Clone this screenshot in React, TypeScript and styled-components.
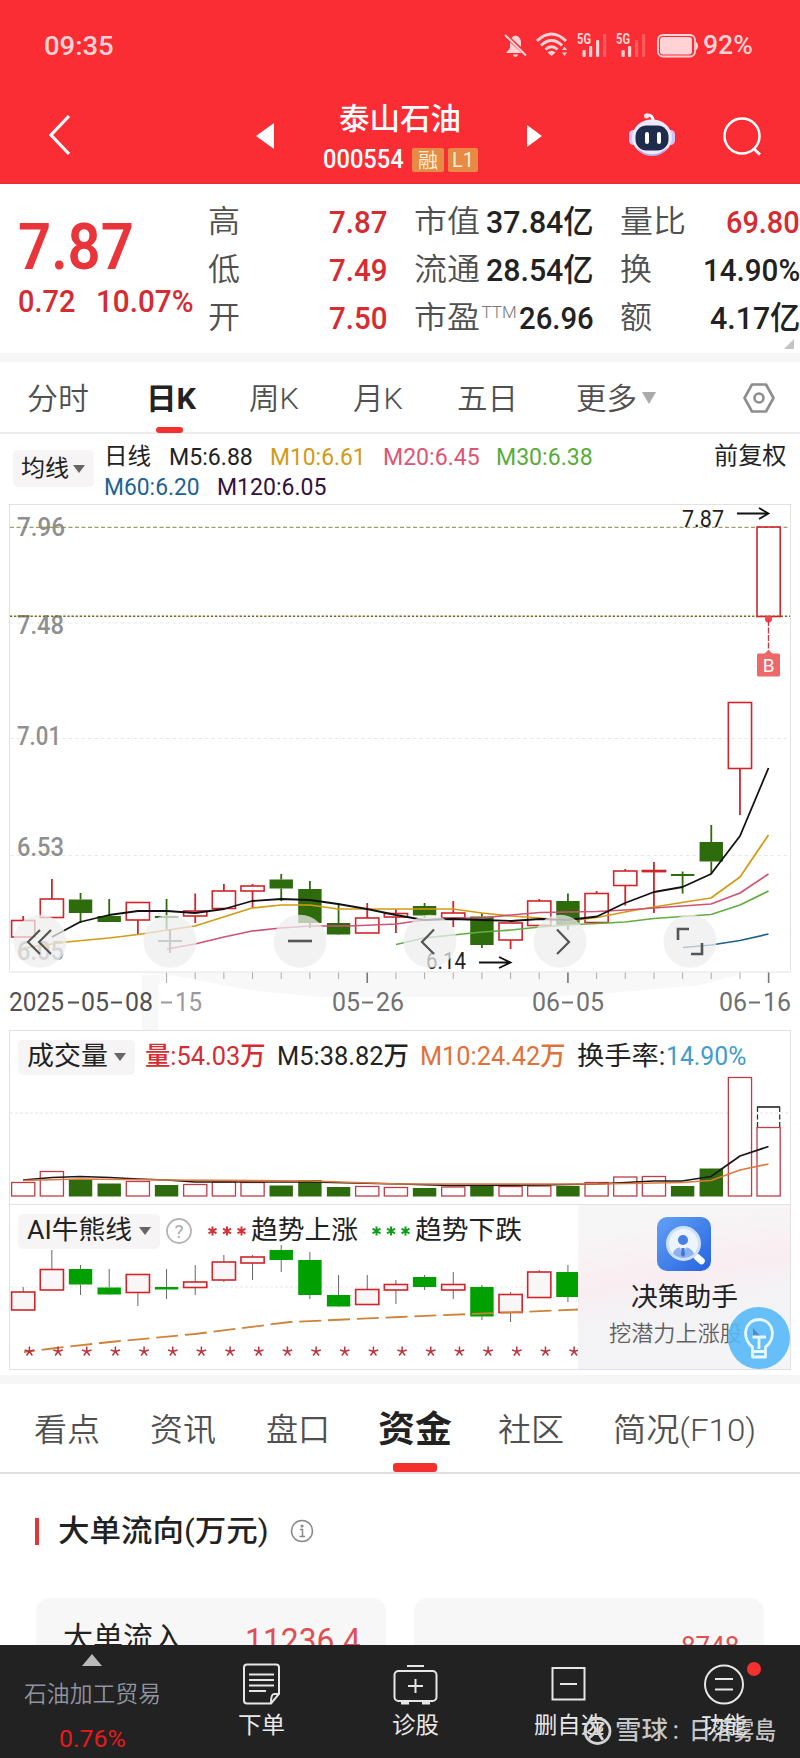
import React, { useLayoutEffect, useRef, useState } from 'react';
import styled, { createGlobalStyle } from 'styled-components';

const Global = createGlobalStyle`
  * { box-sizing: border-box; }
  body { margin: 0; background: #fff; font-family: Roboto, "Noto Sans CJK SC", sans-serif; color: #222; }
  svg { display: block; }
`;

/* ---------- text fitted to a fixed measure ---------- */
const FitBox = styled.span<{ $w: number; $ml?: number; $size: number; $color?: string; $weight?: number }>`
  display: block;
  flex: none;
  width: ${p => p.$w}px;
  margin-left: ${p => p.$ml ?? 0}px;
  font-size: ${p => p.$size}px;
  line-height: 1.2;
  font-weight: ${p => p.$weight ?? 400};
  color: ${p => p.$color ?? 'inherit'};
  white-space: nowrap;
`;
const FitInner = styled.span`
  display: inline-block;
  transform-origin: 0 50%;
  margin-left: -1px;
`;
type FitProps = { w: number; ml?: number; size: number; color?: string; weight?: number; children: React.ReactNode };
function Fit({ w, ml, size, color, weight, children }: FitProps) {
  const ref = useRef<HTMLSpanElement>(null);
  const [k, setK] = useState(1);
  useLayoutEffect(() => {
    if (ref.current) setK((w + 2) / ref.current.offsetWidth);
  }, [w]);
  return (
    <FitBox $w={w} $ml={ml} $size={size} $color={color} $weight={weight}>
      <FitInner ref={ref} style={{ transform: `scaleX(${k})` }}>{children}</FitInner>
    </FitBox>
  );
}

/* ---------- layout parts ---------- */
const Page = styled.main`width: 800px; height: 1758px; overflow: hidden; background: #fff; display: flex; flex-direction: column;`;
const Header = styled.header`background: #fb2d34; height: 184px; flex: none; color: #fff; border-bottom: 1px solid #d8333a;`;
const StatusBar = styled.div`height: 91px; display: flex; align-items: center; padding: 1px 0 0 45px; color: #ffd3d5;`;
const StatusIcons = styled.div`margin-left: auto; display: flex; align-items: center;`;
const NavBar = styled.div`height: 92px; display: flex; align-items: flex-start; padding-left: 48px;`;
const Title = styled.div`display: flex; flex-direction: column; align-items: flex-start; width: 156px; margin-left: 48px; padding-top: 10px; height: 92px;`;
const CodeLine = styled.div`display: flex; align-items: center; margin-top: 7px;`;
const Tag = styled.span<{ $ml: number; $w: number }>`
  margin-left: ${p => p.$ml}px; width: ${p => p.$w}px; height: 24px; border-radius: 2px; background: #e68a45; color: #fff0d2;
  display: flex; align-items: center; justify-content: center; font-size: 20px;
`;
const Shift = styled.div<{ $ml?: number; $mt?: number }>`margin-left: ${p => p.$ml ?? 0}px; margin-top: ${p => p.$mt ?? 0}px; flex: none;`;

const Quote = styled.section`height: 169px; flex: none; display: flex;`;
const PriceBlock = styled.div`width: 209px; padding: 24px 0 0 19px; display: flex; flex-direction: column;`;
const PriceRow = styled.div`display: flex; margin-top: -3px;`;
const StatCol = styled.div<{ $w: number; $ml: number }>`
  width: ${p => p.$w}px; margin-left: ${p => p.$ml}px; padding-top: 14px; display: flex; flex-direction: column; flex: none;
`;
const StatRow = styled.div`height: 48px; display: flex; align-items: center; justify-content: space-between;`;
const Ttm = styled.sup`font-size: 17px; align-self: flex-start; color: #777; margin-top: 8px; width: 33px; margin-left: -1px;`;
const Corner = styled.i`
  align-self: flex-end; width: 0; height: 0; border-bottom: 10px solid #c4c4c4; border-left: 10px solid transparent; margin: -3px 5px 0 0;
`;
const Band = styled.div`height: 9px; background: #f6f6f6; flex: none;`;
const Tabs = styled.nav<{ $h: number; $pt: number; $line: string }>`
  height: ${p => p.$h}px; flex: none; display: flex; align-items: flex-start; padding-top: ${p => p.$pt}px; border-bottom: 2px solid ${p => p.$line};
`;
const Tab = styled.div`display: flex; flex-direction: column; flex: none;`;
const Mark = styled.i<{ $w: number; $h: number; $ml: number; $mt: number }>`
  width: ${p => p.$w}px; height: ${p => p.$h}px; margin: ${p => p.$mt}px 0 0 ${p => p.$ml}px; border-radius: 3px; background: #f4302f;
`;
const MaBar = styled.div`height: 70px; flex: none; display: flex; padding: 8px 0 0 13px;`;
const Select = styled.button<{ $w: number; $h: number; $mt?: number }>`
  width: ${p => p.$w}px; height: ${p => p.$h}px; margin: ${p => p.$mt ?? 0}px 0 0; flex: none; border: 0; border-radius: 5px;
  background: #f6f4f5; color: #222; display: flex; align-items: center; justify-content: space-between; padding: 0 9px 0 8px; font-family: inherit;
`;
const Caret = styled.i<{ $w?: number; $h?: number; $c?: string }>`
  display: block; width: 0; height: 0; border-left: ${p => p.$w ?? 6}px solid transparent; border-right: ${p => p.$w ?? 6}px solid transparent;
  border-top: ${p => p.$h ?? 8}px solid ${p => p.$c ?? '#666'};
`;
const MaLines = styled.div`margin-left: 11px; width: 610px; display: flex; flex-direction: column; gap: 1px;`;
const MaLine = styled.div`display: flex; align-items: center; height: 29px;`;
const Chart = styled.section<{ $h: number }>`height: ${p => p.$h}px; flex: none;`;
const Panel = styled.section<{ $h: number }>`
  height: ${p => p.$h}px; flex: none; margin: 0 9px; border: 1px solid #e2e2e4; border-bottom: 0; display: flex; flex-direction: column;
`;
const PanelHead = styled.div`display: flex; align-items: center; height: 35px; margin: 8px 0 0 8px; padding-top: 1px; flex: none;`;
const AiBox = styled.section`height: 166px; flex: none; margin: 0 9px; border: 1px solid #e2e2e4; display: flex;`;
const AiMain = styled.div`width: 568px; flex: none; overflow: hidden;`;
const Helper = styled.aside`
  flex: 1; position: relative; display: flex; flex-direction: column; align-items: center; padding-top: 12px;
  background: linear-gradient(170deg, #f7f6f7 15%, #f9edf1 42%, #f3f3f6 62%, #f5f5f8 100%);
`;
const Bulb = styled.div`position: absolute; right: 0; top: 101px;`;
const Section = styled.div`height: 124px; flex: none; display: flex; align-items: center; padding: 0 0 10px 35px;`;
const RedBar = styled.i`width: 4px; height: 27px; background: #e2353a; margin-right: 20px;`;
const Cards = styled.div`height: 47px; flex: none; overflow: hidden; display: flex; gap: 28px; padding-left: 36px;`;
const Card = styled.div<{ $pt: number }>`
  width: 350px; height: 120px; border-radius: 14px; background: #f7f7f7; padding: ${p => p.$pt}px 26px 0 28px; display: flex; justify-content: space-between; align-items: flex-start;
`;
const BottomBar = styled.footer`height: 113px; flex: none; background: #222; display: flex; position: relative; color: #e9e9e9;`;
const Item = styled.div<{ $ml: number; $w: number }>`
  width: ${p => p.$w}px; margin-left: ${p => p.$ml}px; padding-top: 18px; display: flex; flex-direction: column; align-items: center; flex: none;
`;
const Board = styled.div`width: 136px; margin-left: 24px; display: flex; flex-direction: column; align-items: center; padding-top: 9px; flex: none;`;
const UpArrow = styled.i`width: 0; height: 0; border-left: 10px solid transparent; border-right: 10px solid transparent; border-bottom: 12px solid #bbb;`;
const Dot = styled.i`position: absolute; left: 747px; top: 17px; width: 14px; height: 14px; border-radius: 50%; background: #f3312f;`;
const Watermark = styled.div`position: absolute; left: 583px; top: 71px; display: flex; align-items: center; color: rgba(222,222,222,.88);`;

/* ---------- chart data ---------- */
const X0 = 23.2, STEP = 28.67, R = '#d0252b', G = '#2e6b0d';
const cx = (i: number) => X0 + STEP * i;
type Bar = [up: 0 | 1, top: number, bottom: number, high: number, low: number];
const kline: Bar[] = [
  [1, 920.5, 937, 916, 937], [1, 899, 917.5, 879, 917.5], [0, 899.5, 913, 893, 923], [0, 916, 922, 899, 922],
  [1, 902.5, 920, 902, 935], [0, 916, 918, 899, 930], [1, 911, 916, 893.5, 923], [1, 891, 908.5, 884, 910],
  [1, 886, 891, 884, 908], [0, 879.5, 888.5, 874, 901], [0, 889, 923, 881, 928], [0, 923, 934.5, 903, 934],
  [1, 918, 933, 903, 933], [1, 913.5, 917, 909, 933], [0, 906, 915.5, 903, 918], [1, 913, 918, 901, 927],
  [0, 916.5, 945, 913, 948], [1, 923, 940, 923, 949], [1, 901, 925.5, 899, 925], [0, 901, 925, 893.5, 930],
  [1, 893.5, 922.5, 891, 922], [1, 871, 885.5, 869, 905.5], [1, 870.5, 871.5, 862, 913], [0, 874, 876, 871.5, 893.5],
  [0, 842, 861.5, 825, 874], [1, 702.5, 768.5, 702, 815], [1, 527, 616.5, 527, 616],
];
const trend: Bar[] = [
  [1, 1292, 1310, 1287, 1310], [1, 1269.5, 1290, 1250, 1290], [0, 1269, 1284.5, 1265, 1295], [0, 1287.5, 1294.5, 1269, 1294],
  [1, 1274.5, 1292.5, 1274, 1306], [0, 1287, 1289.5, 1269, 1299], [1, 1282, 1287.5, 1265, 1295], [1, 1262, 1280, 1255, 1282],
  [1, 1257, 1263, 1255, 1280], [0, 1250, 1260, 1245, 1272], [0, 1260, 1295, 1252, 1299], [0, 1295, 1306.5, 1275, 1306],
  [1, 1289.5, 1304.5, 1275, 1304], [1, 1284.5, 1290, 1280, 1304], [0, 1277, 1287, 1275, 1290], [1, 1284.5, 1290, 1272, 1299],
  [0, 1287, 1316.5, 1285, 1320], [1, 1294.5, 1312.5, 1292, 1322], [1, 1272, 1297.5, 1270, 1297], [0, 1272, 1297, 1265, 1302],
];
const volume = [1182.5, 1171.5, 1179.5, 1183.5, 1181.5, 1185, 1184.5, 1182, 1182.5, 1185.5, 1180, 1187, 1186.5, 1187.5, 1188, 1187, 1185.5, 1186.5, 1186, 1186, 1182.5, 1177, 1176.5, 1186, 1168.5, 1077.5, 1127.5];

function Candle({ i, bar, up = R, down = G, wick, fill = '#fff' }: { i: number; bar: Bar; up?: string; down?: string; wick?: string; fill?: string }) {
  const [isUp, top, bottom, high, low] = bar;
  const x = cx(i), c = isUp ? up : down;
  return (
    <g>
      <path d={`M${x} ${high}V${top}M${x} ${bottom}V${low}`} stroke={wick ?? c} strokeWidth={wick ? 1 : 1.8} />
      {isUp
        ? <rect x={x - 11.6} y={top} width={23.2} height={bottom - top} fill={fill} stroke={c} strokeWidth={1.6} />
        : <rect x={x - 11.7} y={top} width={23.4} height={bottom - top} fill={c} />}
    </g>
  );
}
function Label({ x, y, w, size = 25, color = '#8f8f8f', weight = 500, children }: { x: number; y: number; w: number; size?: number; color?: string; weight?: number; children: string }) {
  return <text x={x} y={y} textLength={w} lengthAdjust="spacingAndGlyphs" fontSize={size} fill={color} fontWeight={weight}>{children}</text>;
}
const Line = ({ d, c, w = 1.7 }: { d: string; c: string; w?: number }) => <polyline points={d} fill="none" stroke={c} strokeWidth={w} strokeLinejoin="round" />;

/* Dates are spelled with a wide dash between separately set numerals. */
function DateLabel({ x, y, parts, color }: { x: number; y: number; parts: [number, number, string][]; color: string }) {
  return <g>{parts.map(([dx, w, t]) => t === '-'
    ? <path key={dx} d={`M${x + dx} ${y - 8.5}h${w}`} stroke={color} strokeWidth="2" />
    : <Label key={dx} x={x + dx} y={y} w={w} size={26} color={color} weight={400}>{t}</Label>)}</g>;
}

function KChart() {
  return (
    <svg width="800" height="526" viewBox="0 504 800 526">
      <path d="M142 973H745L700 985 600 994 540 997H320L250 990 170 975Z" fill="#f8f8f9" />
      <path d="M142 975H170L158 985V1034H142Z" fill="#f8f8f9" />
      <rect x="9.5" y="504.5" width="781" height="467.5" fill="none" stroke="#e2e2e4" />
      <path d="M10 623H790M10 738.5H790M10 855.5H790" stroke="#e8e8e8" strokeDasharray="3.5 3" />
      <Label x={17} y={535.5} w={48}>7.96</Label>
      <Label x={17} y={634} w={47}>7.48</Label>
      <Label x={17} y={745} w={44}>7.01</Label>
      <Label x={17} y={856} w={47}>6.53</Label>
      <Label x={17} y={960} w={47}>6.05</Label>
      <path d="M10 527.3H790" stroke="#84864a" strokeDasharray="4 2.5" />
      <path d="M10 616.3H790" stroke="#74651f" strokeWidth="1.4" strokeDasharray="2.3 1.8" />
      {kline.map((b, i) => <Candle key={i} i={i} bar={b} fill="none" />)}
      <path d="M643 871.2H665.5" stroke={R} strokeWidth="2" />
      <Line c="#d39a14" d="23,948 52,944 66,942 109,938 138,934.5 195,926 252,908 281,905 310,905 338,909 367,909 424,909 453,909 482,913 511,916 540,918 568,921 597,917.5 625,912 654,907 682,902.5 711,898 740,877 768.5,835" />
      <Line c="#cf5372" d="167,949 195,944 224,937 252,931 281,928 310,926 350,926 396,924 424,920 453,918 482,918 511,915 540,912.5 597,911.5 625,910 654,908 711,904 740,893 768.5,874" />
      <Line c="#62ad42" d="396,944.5 424,938 453,935 482,932 511,930 540,927 568,925 625,922 654,918.5 711,914.5 740,905 768.5,891" />
      <Line c="#1d608e" d="683,947.5 711,945 740,940.5 768.5,934" />
      <Line c="#111" w={1.8} d="52,937 80,922 109,915 138,911 167,911 195,913 224,909 252,901 281,899 310,900 338,904 367,909 396,915 424,920 453,919 482,920 511,921 540,919 568,920 597,916.5 625,903 654,892 682.5,887 711,874 740,836 768.5,768" />
      <Label x={682} y={527} w={42} size={23} color="#222" weight={400}>7.87</Label>
      <path d="M737 513.5H768M759 508L768.5 513.5 759 519" fill="none" stroke="#111" strokeWidth="1.8" />
      <circle cx="768.5" cy="619" r="3.5" fill="#f04848" />
      <path d="M768.5 620V652" stroke="#c43a48" strokeWidth="1.4" strokeDasharray="6 1.5" />
      <path d="M758.5 653.5H764.5L768.5 650 772.5 653.5H778.5A1.5 1.5 0 0 1 780 655V675A1.5 1.5 0 0 1 778.5 676.5H758.5A1.5 1.5 0 0 1 757 675V655A1.5 1.5 0 0 1 758.5 653.5Z" fill="#ee6769" />
      <text x="768.6" y="672" fontSize="19" fill="#fff" textAnchor="middle">B</text>
      <Label x={426} y={968.5} w={40} size={23} color="#222" weight={400}>6.14</Label>
      <path d="M479 962.5H510M499 957L510.5 962.5 499 968" fill="none" stroke="#111" strokeWidth="1.8" />
      {[40, 170, 300, 430, 560, 690].map(x => <circle key={x} cx={x} cy="941.3" r="26.5" fill="#eeeeef" fillOpacity=".74" />)}
      <g fill="none" stroke="#555" strokeWidth="2.2">
        <path d="M40 930 28 942 40 954M51 930 39 942 51 954" />
        <path d="M158 941H182M170 929V953" stroke="#ccc" />
        <path d="M288 941H312" strokeWidth="2.6" />
        <path d="M434 929.5 422 942 434 954" />
        <path d="M557 929.5 569 942 557 954" />
        <path d="M678 940V929H689M691 954H702V943" strokeWidth="2.6" />
      </g>
      {Array.from({ length: 22 }, (_, k) => {
        const x = cx(k + 5), major = k === 7 || k === 14 || k === 21;
        return <path key={k} d={`M${x} 972.5V${major || k === 0 ? 983 : 979}`} stroke={major ? '#777' : '#aaa'} strokeWidth={major ? 1.6 : 1} />;
      })}
      <DateLabel x={10} y={1011} color="#505050" parts={[[-1, 55, '2025'], [58, 11, '-'], [71, 28, '05'], [101, 11, '-'], [115, 28, '08']]} />
      <DateLabel x={161} y={1011} color="#999" parts={[[0, 11, '-'], [14, 27, '15']]} />
      <DateLabel x={333} y={1011} color="#707070" parts={[[-1, 28, '05'], [29, 11, '-'], [43, 28, '26']]} />
      <DateLabel x={533} y={1011} color="#707070" parts={[[-1, 28, '06'], [29, 11, '-'], [43, 28, '05']]} />
      <DateLabel x={720} y={1011} color="#707070" parts={[[-1, 28, '06'], [29, 11, '-'], [43, 28, '16']]} />
    </svg>
  );
}

function VolumeChart() {
  return (
    <svg width="781" height="130" viewBox="10 1074 781 130">
      <path d="M10 1113H791" stroke="#e4e4e4" strokeDasharray="3 2" />
      {volume.map((t, i) => kline[i][0]
        ? <rect key={i} x={cx(i) - 11.6} y={t} width="23.2" height={1196 - t} fill="#fff" stroke="#bd3e48" strokeWidth="1.3" />
        : <rect key={i} x={cx(i) - 11.7} y={t} width="23.4" height={1196.5 - t} fill={G} />)}
      <path d="M757 1107H780" stroke="#222" strokeWidth="1.6" />
      <path d="M757.5 1107V1127M779.7 1107V1127" stroke="#333" strokeWidth="1.3" strokeDasharray="5 2.5" />
      <Line c="#181818" d="23,1180 52,1177.5 80,1176.5 110,1177.5 138,1179 167,1180 195,1182 310,1182 400,1184 450,1185.5 540,1185 597,1184 654,1181 682,1181 711,1176.5 740,1156 768.5,1146.5" />
      <Line c="#e0783f" d="23,1180.5 80,1179 167,1180 310,1181 400,1184 600,1184 682,1182.5 711,1180.5 740,1170 768.5,1164" />
    </svg>
  );
}

function rays(angles: number[], x: number, y: number, r: number) {
  return angles.map(a => `M${x} ${y}L${x + r * Math.cos((a * Math.PI) / 180)} ${y - r * Math.sin((a * Math.PI) / 180)}`).join('');
}
const FIVE = [90, 162, 234, 306, 18], SIX = [90, 150, 210, 270, 330, 30];
const Stars = ({ c }: { c: string }) => (
  <svg width="40" height="12" viewBox="0 0 40 12"><path d={[5.5, 20, 34.5].map(x => rays(SIX, x, 6, 4.6)).join('')} stroke={c} strokeWidth="2" /></svg>
);

function TrendChart() {
  return (
    <svg width="568" height="126" viewBox="10 1243 568 126">
      <path d="M10 1287H578" stroke="#e8e8e8" strokeDasharray="3 2" />
      {trend.map((b, i) => <Candle key={i} i={i} bar={b} down="#00a000" wick="#666" fill="#f8f6f7" />)}
      <polyline points="24,1352 52,1348.5 110,1342 195,1334 290,1322 400,1317 578,1309.5" fill="none" stroke="#cf8339" strokeWidth="1.8" strokeDasharray="22 6.8" strokeDashoffset="11" />
      <path d={Array.from({ length: 20 }, (_, i) => rays(FIVE, 29.4 + STEP * i, 1351.5, 5)).join('')} stroke="#b93640" strokeWidth="1.5" />
    </svg>
  );
}

/* ---------- icons ---------- */
const Muted = () => (
  <svg width="24" height="24" viewBox="0 0 24 24"><path d="M11.5 1.5C7.5 2.5 6 5.5 6 9V14L2 19H20L17 15V9C17 5 15.5 2.5 11.5 1.5ZM9 20.5H14A2.5 2.5 0 0 1 9 20.5Z" fill="#ffd3d5" /><path d="M1 1 23 21" stroke="#fb2d34" strokeWidth="4" /><path d="M1 1 22 21.5" stroke="#ffd3d5" strokeWidth="2" /></svg>
);
const Wifi = () => (
  <svg width="32" height="26" viewBox="0 0 32 26"><g fill="none" stroke="#ffd3d5" strokeWidth="3"><path d="M1 9Q15.500-5 30 9M5 13.500Q15.500 3.500 26 13.500M9.500 17.500Q15.500 12 21.500 17.500" /></g><path d="M15.500 24 11.500 20.500Q15.500 17 19.500 20.500ZM26 18 28.500 14.500 31 18ZM26 20.500 28.500 24 31 20.500Z" fill="#ffd3d5" /></svg>
);
const Signal = ({ bars }: { bars: number }) => (
  <svg width="32" height="26" viewBox="0 0 32 26">
    <text x="0" y="11.5" fontSize="14.5" fontWeight="700" fill="#ffd3d5" textLength="14" lengthAdjust="spacingAndGlyphs">5G</text>
    {[[5.5, 18], [12, 14], [19, 8], [26, 2]].map(([x, y], i) => <rect key={i} x={x} y={y} width="3.2" height={25 - y} rx="1" fill="#ffd3d5" fillOpacity={i < bars ? 1 : 0.28} />)}
  </svg>
);
const Battery = () => (
  <svg width="42" height="24" viewBox="0 0 42 24"><rect x="1" y="1" width="37" height="21.5" rx="5" fill="none" stroke="#ffd3d5" strokeWidth="1.8" /><rect x="3" y="3" width="32" height="17.500" rx="3" fill="#ffd3d5" /><path d="M39.500 8.500Q42 12 39.500 15.500Z" fill="#ffd3d5" stroke="#ffd3d5" /></svg>
);
const Robot = () => (
  <svg width="48" height="44" viewBox="0 0 48 44">
    <path d="M25 8C25 4 23 1.5 19 2" fill="none" stroke="#fff" strokeWidth="3" strokeLinecap="round" />
    <circle cx="18.500" cy="3" r="2.500" fill="#fbe6ef" />
    <rect x="1" y="17" width="10" height="15" rx="4.5" fill="#cfc5f7" /><rect x="37" y="17" width="10" height="15" rx="4.5" fill="#cfc5f7" />
    <ellipse cx="24" cy="24.500" rx="20" ry="18" fill="#eeeaff" /><path d="M8 34Q24 49 40 34Q35 43 24 43 13 43 8 34Z" fill="#b6a8ef" />
    <rect x="7.500" y="12.500" width="33" height="25" rx="11" fill="#1e2b4b" />
    <path d="M19 21V29M31 21V29" stroke="#fff" strokeWidth="4" strokeLinecap="round" />
  </svg>
);
const HelperIcon = () => (
  <svg width="54" height="54" viewBox="0 0 54 54">
    <defs><linearGradient id="hg" x1="0" y1="0" x2="1" y2="1"><stop offset="0" stopColor="#63a1f6" /><stop offset="1" stopColor="#2563df" /></linearGradient></defs>
    <rect width="54" height="54" rx="10" fill="url(#hg)" />
    <path d="M40 40 44.500 44" stroke="#fff" strokeWidth="6.500" strokeLinecap="round" />
    <circle cx="26.500" cy="26.500" r="16" fill="#edf4fe" stroke="#cfe0fb" strokeWidth="3" />
    <circle cx="26" cy="23" r="5" fill="#4680e2" /><path d="M16 37Q17 31 23 30.500L26 38 29 30.500Q35 31 37 37Q26.500 45 16 37Z" fill="#8db2ef" /><path d="M24.500 31H27.500L28 38 26 40 24 38Z" fill="#3c76dd" />
  </svg>
);
const BulbIcon = () => (
  <svg width="62" height="64" viewBox="0 0 62 64"><circle cx="31" cy="32" r="31" fill="#58b9f8" fillOpacity=".9" />
    <path d="M25 22 34 32 25 31Z" fill="#548ac8" />
    <g fill="none" stroke="#e7f8ff" strokeWidth="2.800" strokeLinejoin="round"><path d="M24.500 51V41C14 34 15 14 31 13.500C47 14 48 34 37.500 41V51ZM24.500 31H38M31 31V43M26 45.500H36" /></g></svg>
);
const Order = () => <svg width="39" height="42" viewBox="0 0 39 42" fill="none" stroke="#e6e6e6" strokeWidth="2"><path d="M5 1.500H34Q37 1.500 37 4.500V31L29 40.500H5Q2 40.500 2 37.500V4.500Q2 1.500 5 1.500ZM37 31H32Q29 31 29 40M7 11.500H32M7 17H32M7 22.500H32M7 28H24" /></svg>;
const Clinic = () => <svg width="45" height="42" viewBox="0 0 45 42" fill="none" stroke="#e6e6e6" strokeWidth="2"><path d="M14 3H31M22.500 16V30M15 23H30" /><rect x="1.500" y="8" width="42" height="30" rx="4" /><path d="M8 40H16M29 40H37" strokeWidth="3" /></svg>;
const Remove = () => <svg width="36" height="42" viewBox="0 0 36 42" fill="none" stroke="#e6e6e6" strokeWidth="2"><rect x="1.500" y="5" width="32" height="31.500" /><path d="M9 21H26" /></svg>;
const Func = () => <svg width="42" height="42" viewBox="0 0 42 42" fill="none" stroke="#e6e6e6" strokeWidth="2"><circle cx="21" cy="21.500" r="19" /><path d="M12 16H30M12 26.500H30" /></svg>;

const gray = '#505050', red = '#d52b31';
export default function App() {
  return (
    <Page>
      <Global />
      <Header>
        <StatusBar>
          <Fit w={68} size={25.5} weight={500}>09:35</Fit>
          <StatusIcons>
            <Shift><Muted /></Shift><Shift $ml={8} $mt={-2}><Wifi /></Shift><Shift $ml={9} $mt={-2}><Signal bars={3} /></Shift>
            <Shift $ml={7} $mt={-2}><Signal bars={2} /></Shift><Shift $ml={9}><Battery /></Shift>
            <Fit w={48} ml={5} size={25} weight={500}>92%</Fit><Shift $ml={48} />
          </StatusIcons>
        </StatusBar>
        <NavBar>
          <Shift $mt={23}><svg width="24" height="42" viewBox="0 0 24 42"><path d="M21 2 3 21 21 40" fill="none" stroke="#fff" strokeWidth="3.200" /></svg></Shift>
          <Shift $ml={184} $mt={32}><svg width="18" height="26"><path d="M0 13 18 0V26Z" fill="#fff" /></svg></Shift>
          <Title>
            <Fit w={120} ml={18} size={30} weight={500}>泰山石油</Fit>
            <CodeLine><Fit w={79} ml={2} size={26} weight={500}>000554</Fit><Tag $ml={9} $w={32}>融</Tag><Tag $ml={4} $w={30}>L1</Tag></CodeLine>
          </Title>
          <Shift $ml={49} $mt={34}><svg width="15" height="22"><path d="M15 11 0 0V22Z" fill="#fff" /></svg></Shift>
          <Shift $ml={86} $mt={22}><Robot /></Shift>
          <Shift $ml={46} $mt={25}><svg width="42" height="42" viewBox="0 0 42 42" fill="none" stroke="#fff" strokeWidth="2.500"><circle cx="20" cy="20" r="17.500" /><path d="M32 33 38 38.500" strokeWidth="3" /></svg></Shift>
        </NavBar>
      </Header>

      <Quote>
        <PriceBlock>
          <Fit w={114} size={65} color="#e9343a" weight={600}>7.87</Fit>
          <PriceRow><Fit w={55} size={31.5} color={red} weight={500}>0.72</Fit><Fit w={96} ml={23} size={31.5} color={red} weight={500}>10.07%</Fit></PriceRow>
        </PriceBlock>
        <StatCol $w={177} $ml={0}>
          {[['高', '7.87'], ['低', '7.49'], ['开', '7.50']].map(([a, b]) => (
            <StatRow key={a}><Fit w={30} size={31} color={gray} weight={350}>{a}</Fit><Fit w={56} size={32} color={red} weight={500}>{b}</Fit></StatRow>
          ))}
        </StatCol>
        <StatCol $w={178} $ml={29}>
          <StatRow><Fit w={64} size={31} color={gray} weight={350}>市值</Fit><Fit w={106} size={32} weight={500}>37.84亿</Fit></StatRow>
          <StatRow><Fit w={64} size={31} color={gray} weight={350}>流通</Fit><Fit w={106} size={32} weight={500}>28.54亿</Fit></StatRow>
          <StatRow><Fit w={64} size={31} color={gray} weight={350}>市盈</Fit><Ttm><Fit w={33} size={17} weight={350}>TTM</Fit></Ttm><Fit w={73} size={32} weight={500}>26.96</Fit></StatRow>
        </StatCol>
        <StatCol $w={178} $ml={28}>
          <StatRow><Fit w={64} size={31} color={gray} weight={350}>量比</Fit><Fit w={72} size={32} color={red} weight={500}>69.80</Fit></StatRow>
          <StatRow><Fit w={30} size={31} color={gray} weight={350}>换</Fit><Fit w={95} size={32} weight={500}>14.90%</Fit></StatRow>
          <StatRow><Fit w={30} size={31} color={gray} weight={350}>额</Fit><Fit w={88} size={32} weight={500}>4.17亿</Fit></StatRow>
          <Corner />
        </StatCol>
      </Quote>
      <Band />

      <Tabs $h={72} $pt={19} $line="#ededed">
        <Tab><Fit w={60} ml={28} size={30} color={gray} weight={350}>分时</Fit></Tab>
        <Tab><Fit w={48} ml={59} size={30} weight={700}>日K</Fit><Mark $w={27} $h={6} $ml={68} $mt={10} /></Tab>
        <Tab><Fit w={48} ml={55} size={30} color={gray} weight={350}>周K</Fit></Tab>
        <Tab><Fit w={48} ml={56} size={30} color={gray} weight={350}>月K</Fit></Tab>
        <Tab><Fit w={59} ml={56} size={30} color={gray} weight={350}>五日</Fit></Tab>
        <Tab><Fit w={59} ml={60} size={30} color={gray} weight={350}>更多</Fit></Tab>
        <Shift $ml={6} $mt={11}><Caret $w={7} $h={12} $c="#aaa" /></Shift>
        <Shift $ml={87} $mt={2}><svg width="32" height="30" viewBox="0 0 32 30" fill="none" stroke="#8d8d8d" strokeWidth="2.600"><path d="M9 1.500H23L30.500 15 23 28.500H9L1.500 15Z" strokeLinejoin="round" /><circle cx="16" cy="15" r="4.500" /></svg></Shift>
      </Tabs>

      <MaBar>
        <Select $w={81} $h={37} $mt={8}><Fit w={46} size={23}>均线</Fit><Caret /></Select>
        <MaLines>
          <MaLine>
            <Fit w={45} size={23}>日线</Fit><Fit w={82} ml={20} size={24.5} weight={450}>M5:6.88</Fit><Fit w={94} ml={19} size={24.5} weight={450} color="#d19a18">M10:6.61</Fit>
            <Fit w={95} ml={19} size={24.5} weight={450} color="#dd5574">M20:6.45</Fit><Fit w={95} ml={18} size={24.5} weight={450} color="#58ad38">M30:6.38</Fit>
          </MaLine>
          <MaLine><Fit w={94} size={24.5} weight={450} color="#1e6294">M60:6.20</Fit><Fit w={107} ml={19} size={24.5} weight={450} color="#32103f">M120:6.05</Fit></MaLine>
        </MaLines>
        <Fit w={71} size={23.5}>前复权</Fit>
      </MaBar>

      <Chart $h={526}><KChart /></Chart>

      <Panel $h={174}>
        <PanelHead>
          <Select $w={117} $h={35}><Fit w={79} ml={1} size={26}>成交量</Fit><Caret /></Select>
          <Fit w={119} ml={11} size={26} weight={450} color={red}>量:54.03万</Fit><Fit w={130} ml={13} size={26} weight={450}>M5:38.82万</Fit>
          <Fit w={144} ml={13} size={26} weight={450} color="#df713a">M10:24.42万</Fit><Fit w={86} ml={13} size={26}>换手率:</Fit><Fit w={78} ml={3} size={26} weight={450} color="#3f9ccb">14.90%</Fit>
        </PanelHead>
        <VolumeChart />
      </Panel>

      <AiBox>
        <AiMain>
          <PanelHead>
            <Select $w={142} $h={35}><Fit w={103} ml={1} size={26}>AI牛熊线</Fit><Caret /></Select>
            <Shift $ml={6}><svg width="26" height="26" viewBox="0 0 26 26"><circle cx="13" cy="13" r="12" fill="none" stroke="#b4b4b4" strokeWidth="1.800" /><text x="13" y="20" textAnchor="middle" fontSize="19" fill="#aaa">?</text></svg></Shift>
            <Shift $ml={15}><Stars c="#d62f35" /></Shift><Fit w={105} ml={5} size={26}>趋势上涨</Fit>
            <Shift $ml={14}><Stars c="#0f9d16" /></Shift><Fit w={105} ml={5} size={26}>趋势下跌</Fit>
          </PanelHead>
          <Shift $mt={-5}><TrendChart /></Shift>
        </AiMain>
        <Helper>
          <HelperIcon />
          <Shift $mt={11}><Fit w={105} size={26}>决策助手</Fit></Shift>
          <Shift $mt={8} $ml={-17}><Fit w={131} size={22} color="#606060" weight={350}>挖潜力上涨股</Fit></Shift>
          <Bulb><BulbIcon /></Bulb>
        </Helper>
      </AiBox>
      <Shift $mt={5} /><Band />

      <Tabs $h={90} $pt={27} $line="#e0e0e0">
        <Tab><Fit w={64} ml={35} size={32} color={gray} weight={350}>看点</Fit></Tab>
        <Tab><Fit w={64} ml={52} size={32} color={gray} weight={350}>资讯</Fit></Tab>
        <Tab><Fit w={62} ml={52} size={32} color={gray} weight={350}>盘口</Fit></Tab>
        <Tab><Shift $mt={-2}><Fit w={72} ml={50} size={36} weight={700}>资金</Fit></Shift><Mark $w={44} $h={9} $ml={64} $mt={11} /></Tab>
        <Tab><Fit w={64} ml={48} size={32} color={gray} weight={350}>社区</Fit></Tab>
        <Tab><Fit w={141} ml={51} size={32} color={gray} weight={350}>简况(F10)</Fit></Tab>
      </Tabs>

      <Section>
        <RedBar />
        <Fit w={209} size={30} weight={450}>大单流向(万元)</Fit>
        <Shift $ml={22}><svg width="24" height="24" viewBox="0 0 24 24" fill="none" stroke="#888" strokeWidth="1.500"><circle cx="12" cy="12" r="10.500" /><path d="M10 10.500H12.500V17.500M9.500 17.500H15" /><circle cx="12" cy="7" r=".8" fill="#888" /></svg></Shift>
      </Section>
      <Cards>
        <Card $pt={22}><Fit w={118} size={30}>大单流入</Fit><Fit w={114} size={34} color="#df4e53" weight={450}>11236.4</Fit></Card>
        <Card $pt={33}><span /><Fit w={56} ml={0} size={26} color="#df4e53">8748</Fit></Card>
      </Cards>

      <BottomBar>
        <Board>
          <UpArrow />
          <Shift $mt={15}><Fit w={135} size={23} color="#9094a0" weight={350}>石油加工贸易</Fit></Shift>
          <Shift $mt={15}><Fit w={65} size={24.5} color="#e8191c">0.76%</Fit></Shift>
        </Board>
        <Item $ml={56} $w={90}><Order /><Shift $mt={7}><Fit w={45} size={23}>下单</Fit></Shift></Item>
        <Item $ml={64} $w={90}><Clinic /><Shift $mt={7}><Fit w={45} size={23}>诊股</Fit></Shift></Item>
        <Item $ml={64} $w={90}><Remove /><Shift $mt={7}><Fit w={68} size={23}>删自选</Fit></Shift></Item>
        <Item $ml={65} $w={90}><Func /><Shift $mt={7}><Fit w={44} size={23}>功能</Fit></Shift></Item>
        <Dot />
        <Watermark>
          <svg width="29" height="30" viewBox="0 0 29 30" fill="none" stroke="#d4d4d4" strokeWidth="2.800"><circle cx="14.500" cy="15" r="12.500" /><path d="M8 6 20 24M21 7Q12 14 20 24M6 22Q13 17 13 12" /></svg>
          <Fit w={51} ml={4} size={25} weight={500}>雪球</Fit><Fit w={4} ml={7} size={25} weight={500}>:</Fit><Fit w={85} ml={12} size={24} weight={500}>日落雾島</Fit>
        </Watermark>
      </BottomBar>
    </Page>
  );
}
